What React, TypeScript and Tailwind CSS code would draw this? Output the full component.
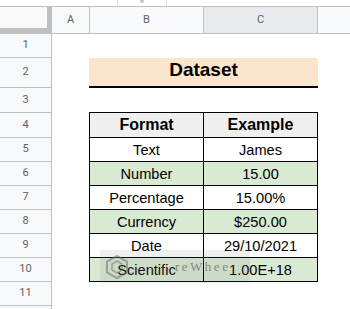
import React from "react";

type Row = {
  n: number;
  h: string;
  kind: "empty" | "title" | "top" | "head" | "data";
  a?: string;
  b?: string;
  green?: boolean;
  hideNum?: boolean;
};

const rows: Row[] = [
  { n: 1, h: "h-[24px]", kind: "empty" },
  { n: 2, h: "h-[30px]", kind: "title" },
  { n: 3, h: "h-[25px]", kind: "top" },
  { n: 4, h: "h-[25px]", kind: "head", a: "Format", b: "Example" },
  { n: 5, h: "h-[24px]", kind: "data", a: "Text", b: "James" },
  { n: 6, h: "h-[24px]", kind: "data", a: "Number", b: "15.00", green: true },
  { n: 7, h: "h-[24px]", kind: "data", a: "Percentage", b: "15.00%" },
  { n: 8, h: "h-[24px]", kind: "data", a: "Currency", b: "$250.00", green: true },
  { n: 9, h: "h-[24px]", kind: "data", a: "Date", b: "29/10/2021" },
  { n: 10, h: "h-[24px]", kind: "data", a: "Scientific", b: "1.00E+18", green: true },
  { n: 11, h: "h-[24px]", kind: "empty" },
  { n: 12, h: "h-[24px]", kind: "empty", hideNum: true },
];

function RowHeader({ n, hide }: { n: number; hide?: boolean }) {
  return (
    <div className="w-[52px] shrink-0 flex items-center justify-center border-r border-b border-[#c0c0c0] bg-[#f8f9fa] text-[11px] text-[#5f6368] font-['Roboto',sans-serif]">
      {hide ? "" : n}
    </div>
  );
}

function BodyRow({ r }: { r: Row }) {
  const cellText = "font-['Liberation_Sans',Arial,sans-serif] text-black";
  let cells: React.ReactNode;
  if (r.kind === "empty") {
    cells = <div className="flex-1" />;
  } else if (r.kind === "title") {
    cells = (
      <>
        <div className="w-[37px] shrink-0" />
        <div
          className={`w-[229px] shrink-0 bg-[#fce5cd] border-b-2 border-black flex items-center justify-center pb-[3px] text-[19px] font-bold ${cellText}`}
        >
          Dataset
        </div>
        <div className="flex-1" />
      </>
    );
  } else if (r.kind === "top") {
    cells = (
      <>
        <div className="w-[37px] shrink-0" />
        <div className="w-[229px] shrink-0 border-b border-black" />
        <div className="flex-1" />
      </>
    );
  } else {
    const bg = r.kind === "head" ? "bg-[#efefef]" : r.green ? "bg-[#d9ead3]" : "bg-white";
    const txt = r.kind === "head" ? "text-[16px] font-bold" : "text-[14.6px] pt-[2px]";
    cells = (
      <>
        <div className="w-[37px] shrink-0" />
        <div
          className={`w-[114px] shrink-0 border-l border-b border-black flex items-center justify-center ${bg} ${txt} ${cellText}`}
        >
          {r.a}
        </div>
        <div
          className={`w-[115px] shrink-0 border-l border-r border-b border-black flex items-center justify-center ${bg} ${txt} ${cellText}`}
        >
          {r.b}
        </div>
        <div className="flex-1" />
      </>
    );
  }
  return (
    <div className={`flex ${r.h} shrink-0`}>
      <RowHeader n={r.n} hide={r.hideNum} />
      <div className="flex flex-1 bg-white">{cells}</div>
    </div>
  );
}

export default function App() {
  const hdr =
    "flex items-center justify-center border-r border-[#c0c0c0] text-[11px] text-[#5f6368] font-['Roboto',sans-serif]";
  return (
    <div className="relative w-[350px] h-[309px] overflow-hidden bg-white flex flex-col">
      {/* top strip */}
      <div className="h-[7px] shrink-0 border-b border-[#c0c0c0] flex">
        <div className="w-[117px] shrink-0" />
        <div className="w-[50px] shrink-0 border-l border-r border-[#dadce0] flex justify-center">
          <div className="w-[4px] h-[3px] bg-[#c6c6c6] rounded-b-sm" />
        </div>
        <div className="flex-1" />
      </div>
      {/* column header row */}
      <div className="h-[27px] shrink-0 flex border-b border-[#c0c0c0] bg-[#f8f9fa]">
        <div className="w-[52px] shrink-0 flex flex-col">
          <div className="flex flex-1">
            <div className="flex-1 bg-[#f8f9fa]" />
            <div className="w-[5px] bg-[#c0c0c0]" />
          </div>
          <div className="h-[5px] bg-[#c0c0c0]" />
        </div>
        <div className={`w-[38px] shrink-0 ${hdr}`}>A</div>
        <div className={`w-[114px] shrink-0 ${hdr}`}>B</div>
        <div className={`w-[114px] shrink-0 bg-[#e8eaed] ${hdr}`}>C</div>
        <div className="flex-1" />
      </div>
      {rows.map((r) => (
        <BodyRow key={r.n} r={r} />
      ))}
      {/* watermark */}
      <div className="absolute left-[100px] top-[250px] w-[150px] h-[33px] bg-[rgba(120,120,120,0.12)] flex items-center pointer-events-none">
        <svg width="24" height="26" viewBox="0 0 24 26" className="ml-[5px] opacity-50">
          <polygon points="12,2 22,7.5 22,18.5 12,24 2,18.5 2,7.5" fill="none" stroke="#666" strokeWidth="2" />
          <polygon points="12,7 17,10 17,16 12,19 7,16 7,10" fill="none" stroke="#666" strokeWidth="1.5" />
        </svg>
        <span className="ml-[46px] text-[13px] tracking-[2.5px] text-[#666] opacity-70 font-['Liberation_Serif',serif]">
          reWhee
        </span>
      </div>
    </div>
  );
}
